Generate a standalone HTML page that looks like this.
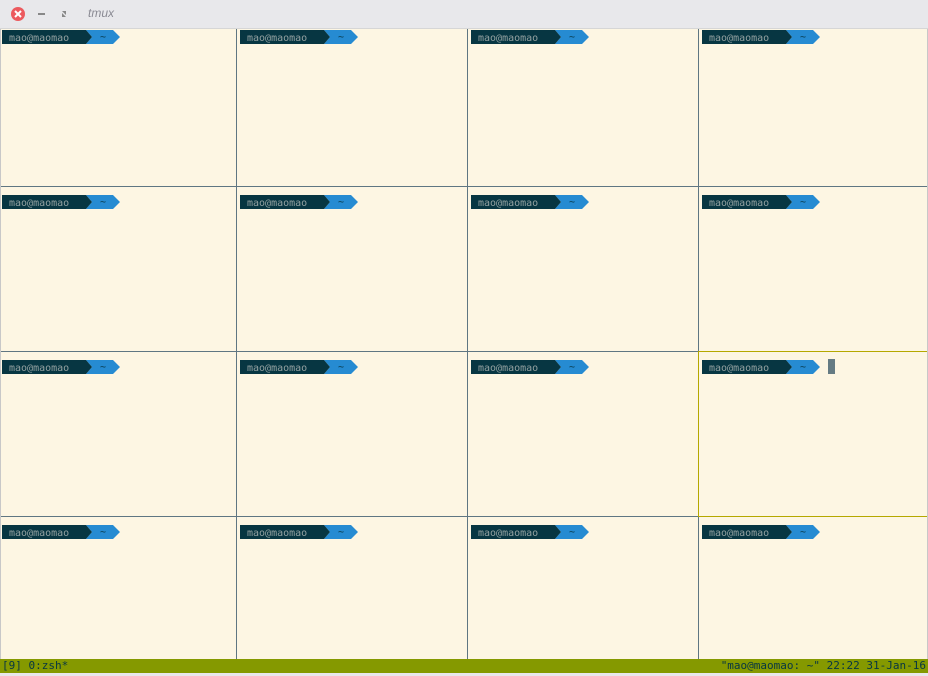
<!DOCTYPE html>
<html><head><style>
body{margin:0;width:928px;height:676px;overflow:hidden;background:#fdf6e3;position:relative;font-family:"DejaVu Sans Mono","Liberation Mono",monospace}
.tb{position:absolute;left:0;top:0;width:928px;height:28px;background:#e8e8eb;border-bottom:1px solid #d6d6d6}
.v{position:absolute;width:1px;background:#5f7682}
.h{position:absolute;height:1px;background:#5f7682}
.st{position:absolute;left:0;top:659px;width:928px;height:14px;background:#859900;color:#073642;font-size:11px;line-height:14px}
</style></head><body>
<div class="tb">
<svg width="130" height="28" style="position:absolute;left:0;top:0">
<circle cx="18" cy="14" r="7" fill="#ec5a5e"/>
<path d="M15 11l6 6M21 11l-6 6" stroke="#fff" stroke-width="2"/>
<rect x="38" y="13" width="7" height="2" fill="#888"/>
<path d="M62 11h4v4zM66 17h-4v-4z" fill="#888"/>
</svg>
<span style="position:absolute;left:88px;top:6px;font:italic 12px 'Liberation Sans',sans-serif;color:#8a8a93">tmux</span>
</div>
<div style="position:absolute;left:0;top:29px;width:1px;height:630px;background:#c8c8c8"></div>
<div style="position:absolute;left:927px;top:29px;width:1px;height:630px;background:#c8c8c8"></div>
<div class="v" style="left:236px;top:29px;height:630px"></div>
<div class="v" style="left:467px;top:29px;height:630px"></div>
<div class="v" style="left:698px;top:29px;height:322px"></div>
<div class="v" style="left:698px;top:351px;height:166px;background:#b5a800"></div>
<div class="v" style="left:698px;top:517px;height:142px"></div>
<div class="h" style="left:1px;top:186px;width:926px"></div>
<div class="h" style="left:1px;top:351px;width:697px"></div>
<div class="h" style="left:699px;top:351px;width:228px;background:#b5a800"></div>
<div class="h" style="left:1px;top:516px;width:697px"></div>
<div class="h" style="left:699px;top:516px;width:228px;background:#b5a800"></div>
<svg width="928" height="676" style="position:absolute;left:0;top:0" font-family="DejaVu Sans Mono, Liberation Mono, monospace" font-size="10">
<defs><g id="pr">
<rect x="0" y="0" width="84" height="14" fill="#073642"/>
<path d="M84 0h27l7 7l-7 7h-27l6-7z" fill="#268bd2"/>
<path d="M84 0l6 7l-6 7z" fill="#073642"/>
<text x="7" y="11" fill="#93a1a1">mao@maomao</text>
<text x="98" y="10" fill="#073642">~</text>
</g></defs>
<use href="#pr" x="2" y="30"/><use href="#pr" x="240" y="30"/><use href="#pr" x="471" y="30"/><use href="#pr" x="702" y="30"/>
<use href="#pr" x="2" y="195"/><use href="#pr" x="240" y="195"/><use href="#pr" x="471" y="195"/><use href="#pr" x="702" y="195"/>
<use href="#pr" x="2" y="360"/><use href="#pr" x="240" y="360"/><use href="#pr" x="471" y="360"/><use href="#pr" x="702" y="360"/>
<use href="#pr" x="2" y="525"/><use href="#pr" x="240" y="525"/><use href="#pr" x="471" y="525"/><use href="#pr" x="702" y="525"/>
<rect x="828" y="359" width="7" height="15" fill="#657b83"/>
</svg>
<div class="st"><span style="position:absolute;left:2px">[9] 0:zsh*</span><span style="position:absolute;right:2px">"mao@maomao: ~" 22:22 31-Jan-16</span></div>
<div style="position:absolute;left:0;top:673px;width:928px;height:3px;background:#e8e8eb"></div>
</body></html>
